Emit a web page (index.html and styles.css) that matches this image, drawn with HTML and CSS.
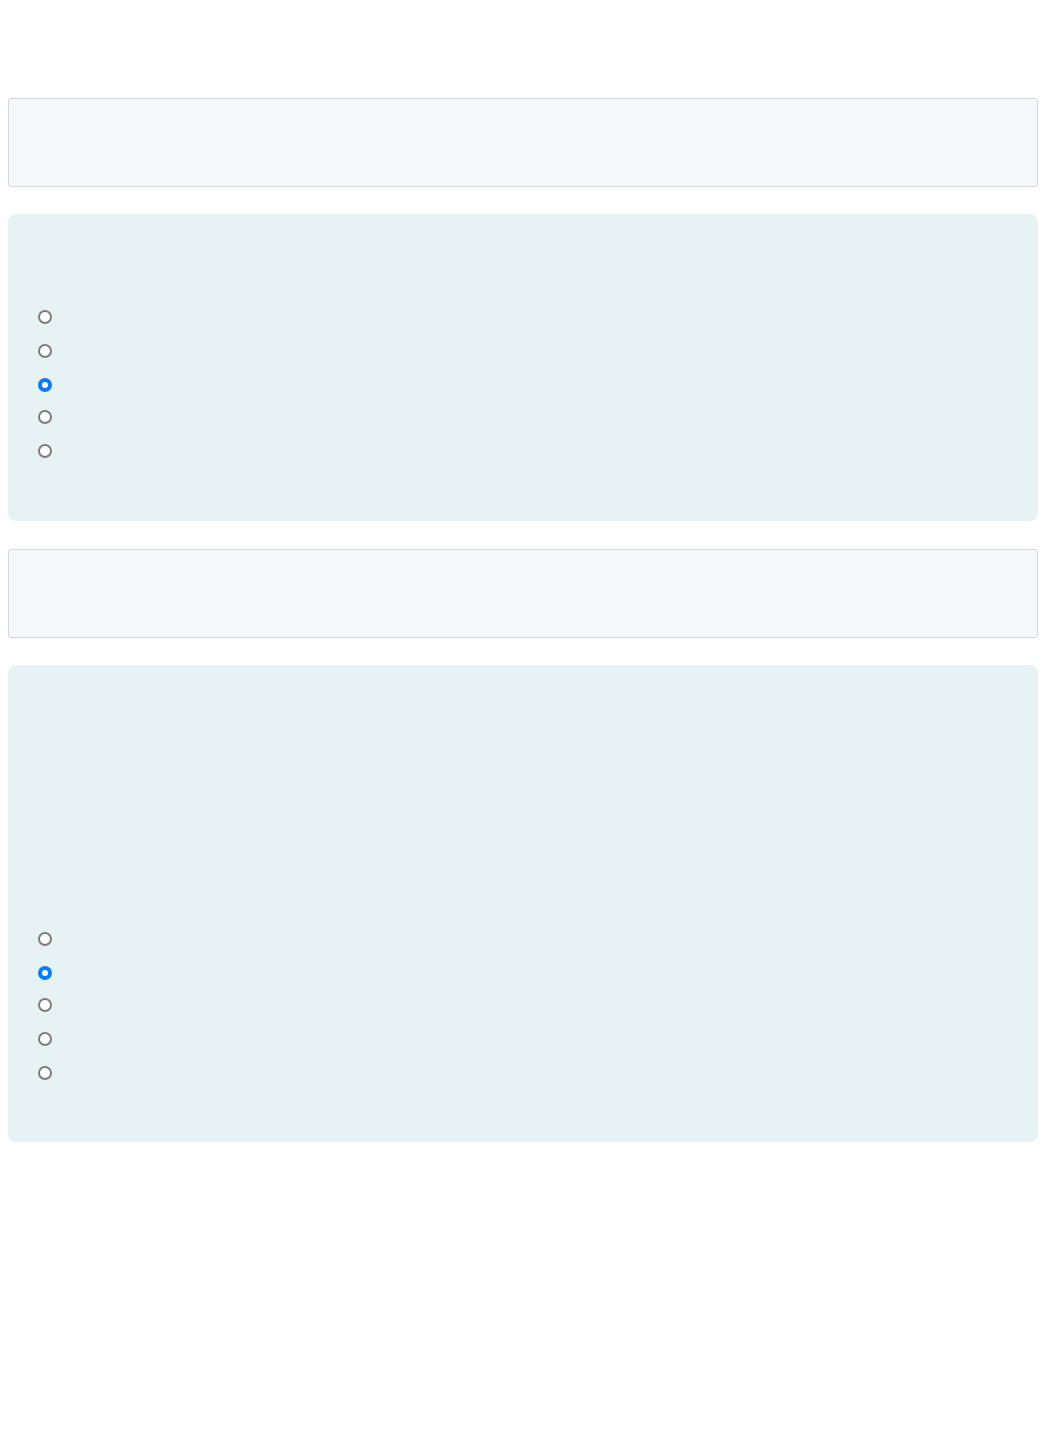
FILE: index.html
```html
<!DOCTYPE html>
<html lang="en">
<head>
    <meta charset="UTF-8">
    <meta name="viewport" content="width=device-width, initial-scale=1.0">
    <title>Quiz</title>
    <link rel="stylesheet" href="styles.css">
</head>
<body>
    <div class="quiz">
        <pre class="code-block"></pre>

        <form class="question q-short">
            <label class="option"><input type="radio" name="q1"></label>
            <label class="option"><input type="radio" name="q1"></label>
            <label class="option picked"><input type="radio" name="q1" checked></label>
            <label class="option"><input type="radio" name="q1"></label>
            <label class="option"><input type="radio" name="q1"></label>
        </form>

        <pre class="code-block"></pre>

        <form class="question q-long">
            <label class="option"><input type="radio" name="q2"></label>
            <label class="option picked"><input type="radio" name="q2" checked></label>
            <label class="option"><input type="radio" name="q2"></label>
            <label class="option"><input type="radio" name="q2"></label>
            <label class="option"><input type="radio" name="q2"></label>
        </form>
    </div>
</body>
</html>
```

FILE: styles.css
```css
body {
    font-family: "Liberation Sans", Arial, sans-serif;
    color: #212529;
    background-color: #fff;
    margin: 8px;
}

.quiz {
    padding-top: 90px;
    margin-right: 1px;
}

.code-block {
    box-sizing: border-box;
    height: 89px;
    margin: 0 0 27px 0;
    background-color: #f6f8fa;
    border: 1px solid #d3d6db;
    border-radius: 3px;
}

.question {
    box-sizing: border-box;
    margin: 0 0 28px 0;
    padding: 0 0 0 26px;
    background-color: #e6f2f4;
    border-radius: 8px;
    display: flex;
    flex-direction: column;
}

.q-short {
    height: 307px;
    padding-top: 95px;
}

.q-long {
    height: 477px;
    padding-top: 266px;
}

.option {
    display: flex;
    align-items: flex-start;
    height: 34px;
}

.option.picked {
    height: 32px;
}

.option input[type="radio"] {
    appearance: none;
    -webkit-appearance: none;
    box-sizing: border-box;
    margin: 1px 3px 0 4px;
    width: 14px;
    height: 14px;
    border: 2px solid #7d7d7d;
    border-radius: 50%;
    background-color: #fff;
}

.option input[type="radio"]:checked {
    border: 4.5px solid #0a7bff;
}
```
